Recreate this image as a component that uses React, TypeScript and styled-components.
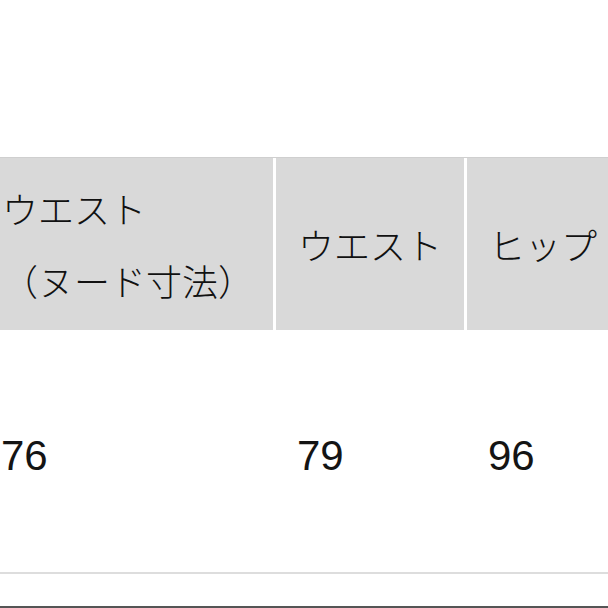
import styled, { createGlobalStyle } from 'styled-components';

const GlobalStyle = createGlobalStyle`
    html, body {
        margin: 0;
        padding: 0;
        background: #ffffff;
        overflow: hidden;
    }
    body {
        font-family: "Liberation Sans", "Noto Sans CJK JP", sans-serif;
        color: #111111;
    }
`;

const Page = styled.div`
    width: 608px;
    height: 608px;
    display: flex;
    flex-direction: column;
    overflow: hidden;
`;

const TopSpace = styled.div`
    height: 157px;
    flex-shrink: 0;
`;

const Table = styled.div`
    margin-left: -20px;
    display: grid;
    grid-template-columns: 293px 188px 1fr;
    column-gap: 3px;
    border-top: 1px solid #cfcfcf;
    border-bottom: 2px solid #dddddd;
`;

const HeadCell = styled.div`
    height: 172px;
    background: #d9d9d9;
    display: flex;
    flex-direction: column;
    justify-content: center;
    padding-left: 22px;
    font-family: "Noto Sans CJK JP", "Liberation Sans", sans-serif;
    font-size: 36px;
    font-weight: 300;
    line-height: 72px;
    white-space: nowrap;
    color: #111111;
`;

const BodyCell = styled.div`
    height: 242px;
    display: flex;
    align-items: center;
    padding-left: 21px;
    padding-top: 10px;
    box-sizing: border-box;
    font-family: "Liberation Sans", Arial, sans-serif;
    font-size: 42px;
    color: #141414;
`;

const Gap = styled.div`
    flex: 1;
`;

const BottomBar = styled.div`
    height: 2px;
    background: #555555;
    flex-shrink: 0;
`;

const headers = [['ウエスト', '（ヌード寸法）'], ['ウエスト'], ['ヒップ']];
const values = ['76', '79', '96'];

export default function App() {
    return (
        <>
            <GlobalStyle />
            <Page>
                <TopSpace />
                <Table>
                    {headers.map((lines, i) => (
                        <HeadCell key={'h' + i}>
                            {lines.map(line => (
                                <span key={line}>{line}</span>
                            ))}
                        </HeadCell>
                    ))}
                    {values.map((v, i) => (
                        <BodyCell key={'v' + i}>{v}</BodyCell>
                    ))}
                </Table>
                <Gap />
                <BottomBar />
            </Page>
        </>
    );
}
